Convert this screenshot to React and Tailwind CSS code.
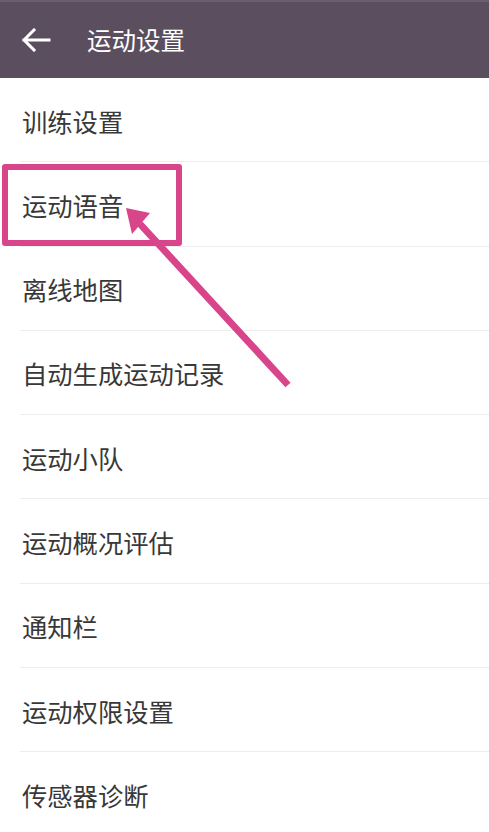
import React from "react";

const items = [
  "训练设置",
  "运动语音",
  "离线地图",
  "自动生成运动记录",
  "运动小队",
  "运动概况评估",
  "通知栏",
  "运动权限设置",
  "传感器诊断",
];

export default function App() {
  return (
    <div
      className="relative w-[489px] h-[832px] overflow-hidden bg-white"
      style={{ fontFamily: '"Noto Sans CJK SC", "Noto Sans", sans-serif' }}
    >
      <div className="h-[78px] bg-[#5b4f5f] border-t-2 border-[#6a5f6d] flex items-center">
        <svg width="30" height="24" viewBox="0 0 30 24" className="ml-[21px]">
          <path
            d="M28 12H3M13 2L3 12l10 10"
            fill="none"
            stroke="white"
            strokeWidth="3"
            strokeLinecap="square"
          />
        </svg>
        <span className="ml-[36px] text-white text-[24.5px] leading-none">运动设置</span>
      </div>

      <div>
        {items.map((t, i) => (
          <div key={i} className="h-[84.3px] pl-[20px]">
            <div className="h-full flex items-center pt-[3px] border-b border-[#ededed]">
              <span className="ml-[2px] text-[#383838] text-[25.3px] leading-none">{t}</span>
            </div>
          </div>
        ))}
      </div>

      {/* highlight box */}
      <div className="absolute left-[2px] top-[164px] w-[180px] h-[82px] border-[6px] border-[#d8458b] rounded-[3px]" />

      {/* annotation arrow */}
      <svg className="absolute left-0 top-0" width="489" height="832" viewBox="0 0 489 832">
        <line x1="288" y1="385" x2="140" y2="224" stroke="#d8458b" strokeWidth="7" />
        <polygon points="126,208 132,234 150,213" fill="#d8458b" />
      </svg>
    </div>
  );
}
